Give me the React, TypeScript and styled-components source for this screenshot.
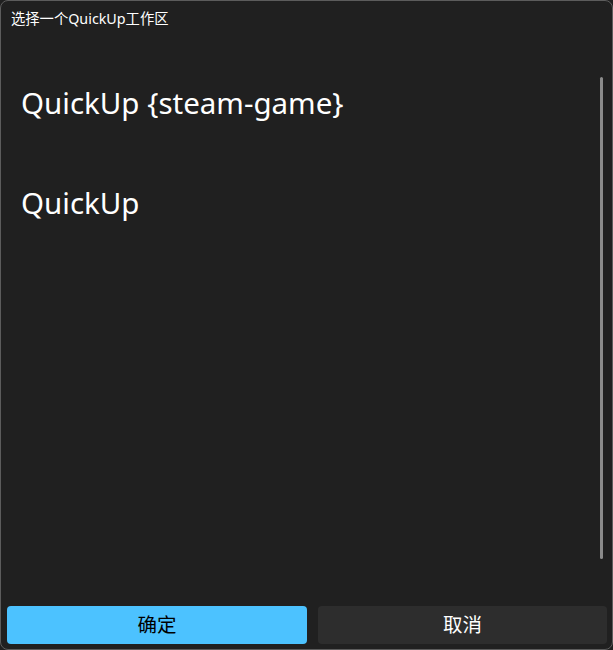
import React from 'react';
import styled, { createGlobalStyle } from 'styled-components';

const GlobalStyle = createGlobalStyle`
  html, body {
    margin: 0;
    padding: 0;
    background: #202020;
  }
  * {
    box-sizing: border-box;
  }
`;

const font = `"Noto Sans", "Noto Sans CJK SC", sans-serif`;

const SWindow = styled.div`
  position: relative;
  display: flex;
  flex-direction: column;
  width: 613px;
  height: 650px;
  background: #202020;
  border: 1px solid #5c5c5c;
  border-radius: 8px;
  overflow: hidden;
  font-family: ${font};
  color: #ffffff;
`;

const STitle = styled.div`
  height: 38px;
  padding: 8px 0 0 10px;
  font-size: 14.3px;
  line-height: 20px;
`;

const SList = styled.div`
  flex: 1;
  display: flex;
  flex-direction: column;
  padding: 42px 0 0 20px;
  gap: 56px;
`;

const SItem = styled.div`
  font-size: 29.5px;
  line-height: 44px;
  color: #ffffff;
`;

const SScrollbar = styled.div`
  position: absolute;
  right: 9px;
  top: 76px;
  width: 3px;
  height: 482px;
  border-radius: 2px;
  background: #8b8b8b;
`;

const SFooter = styled.div`
  display: grid;
  grid-template-columns: 300px 1fr;
  gap: 11px;
  padding: 0 5px 5px 6px;
`;

const SButton = styled.button<{ $primary?: boolean }>`
  height: 38px;
  border: none;
  border-radius: 4px;
  font-family: ${font};
  font-size: 19.5px;
  line-height: 1;
  padding: 0;
  background: ${(p) => (p.$primary ? '#4cc2ff' : '#2d2d2d')};
  color: ${(p) => (p.$primary ? '#000000' : '#ffffff')};
`;

const App = () => {
  return (
    <>
      <GlobalStyle />
      <SWindow>
        <STitle>选择一个QuickUp工作区</STitle>
        <SList>
          <SItem>QuickUp {'{steam-game}'}</SItem>
          <SItem>QuickUp</SItem>
        </SList>
        <SScrollbar />
        <SFooter>
          <SButton $primary>确定</SButton>
          <SButton>取消</SButton>
        </SFooter>
      </SWindow>
    </>
  );
};

export default App;
